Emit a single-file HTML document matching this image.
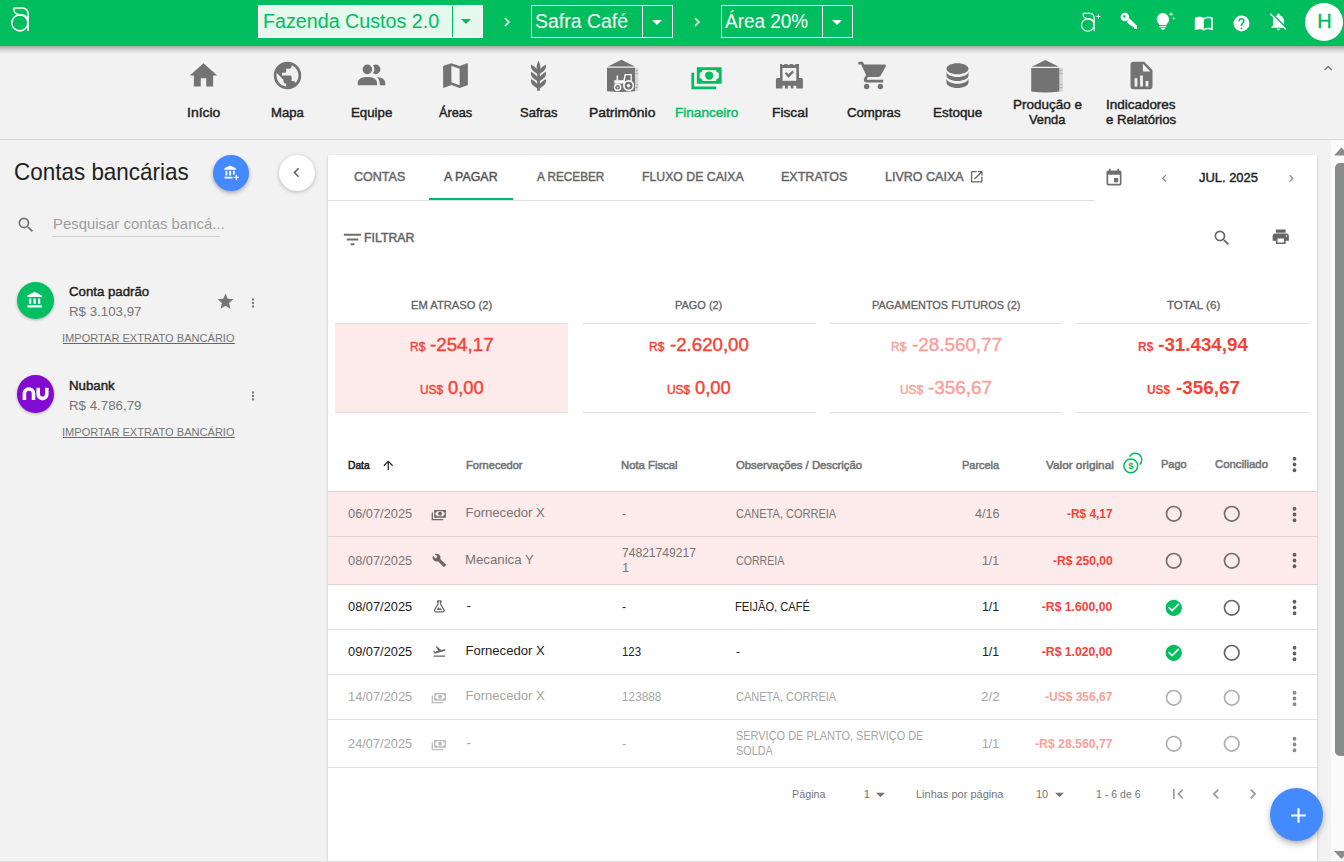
<!DOCTYPE html>
<html lang="pt-BR">
<head>
<meta charset="utf-8">
<title>Aegro - Financeiro - A pagar</title>
<style>
html,body{margin:0;padding:0;background:#f2f2f2}
body{width:1344px;height:862px;overflow:hidden;position:relative;background:#f2f2f2;font-family:"Liberation Sans",sans-serif;}
.a{position:absolute;display:block}
.t{position:absolute;white-space:nowrap;line-height:1;display:block;transform-origin:0 0}
</style>
</head>
<body>
<div class="a" style="left:328px;top:155px;width:989px;height:706px;background:#fff;box-shadow:0 1px 3px rgba(0,0,0,.2),0 1px 1px rgba(0,0,0,.14),0 2px 1px -1px rgba(0,0,0,.12);border-radius:2px 2px 0 0"></div>
<div class="a" style="left:0;top:46px;width:1344px;height:93px;background:#f2f2f2;border-bottom:1px solid #d6d6d6"></div>
<span class="t" style="left:186.93px;top:106.00px;font-size:13.1px;color:#212121;transform:scaleX(1.0662);-webkit-text-stroke:0.42px #212121;">Início</span>
<svg class="a" style="left:187.0px;top:59.0px;" width="33" height="33" viewBox="0 0 24 24"><path fill="#737373" d="M10,20V14H14V20H19V12H22L12,3L2,12H5V20H10Z"/></svg>
<span class="t" style="left:271.10px;top:106.00px;font-size:13.1px;color:#212121;-webkit-text-stroke:0.42px #212121;">Mapa</span>
<svg class="a" style="left:271.3px;top:59.0px;" width="33" height="33" viewBox="0 0 24 24"><path fill="#737373" d="M17.9,17.39C17.64,16.59 16.89,16 16,16H15V13A1,1 0 0,0 14,12H8V10H10A1,1 0 0,0 11,9V7H13A2,2 0 0,0 15,5V4.59C17.93,5.77 20,8.64 20,12C20,14.08 19.2,15.97 17.9,17.39M11,19.93C7.05,19.44 4,16.08 4,12C4,11.38 4.08,10.78 4.21,10.21L9,15V16A2,2 0 0,0 11,18M12,2A10,10 0 0,0 2,12A10,10 0 0,0 12,22A10,10 0 0,0 22,12A10,10 0 0,0 12,2Z"/></svg>
<span class="t" style="left:350.89px;top:106.00px;font-size:13.1px;color:#212121;transform:scaleX(1.0129);-webkit-text-stroke:0.42px #212121;">Equipe</span>
<svg class="a" style="left:354.9px;top:59.0px;" width="33" height="33" viewBox="0 0 24 24"><path fill="#737373" d="M16 17V19H2V17S2 13 9 13 16 17 16 17M12.5 7.5A3.5 3.5 0 1 0 9 11A3.5 3.5 0 0 0 12.5 7.5M15.94 13A5.32 5.32 0 0 1 18 17V19H22V17S22 13.37 15.94 13M15 4A3.39 3.39 0 0 0 13.07 4.59A5 5 0 0 1 13.07 10.410A3.39 3.39 0 0 0 15 11A3.5 3.5 0 0 0 15 4Z"/></svg>
<span class="t" style="left:438.80px;top:106.00px;font-size:13.1px;color:#212121;transform:scaleX(0.9695);-webkit-text-stroke:0.42px #212121;">Áreas</span>
<svg class="a" style="left:438.6px;top:59.0px;" width="33" height="33" viewBox="0 0 24 24"><path fill="#737373" d="M15,19L9,16.89V5L15,7.11M20.5,3C20.44,3 20.39,3 20.34,3L15,5.1L9,3L3.36,4.9C3.15,4.97 3,5.15 3,5.38V20.5A0.5,0.5 0 0,0 3.5,21C3.55,21 3.61,21 3.66,20.97L9,18.9L15,21L20.64,19.1C20.85,19 21,18.85 21,18.62V3.5A0.5,0.5 0 0,0 20.5,3Z"/></svg>
<span class="t" style="left:520.30px;top:106.00px;font-size:13.1px;color:#212121;transform:scaleX(0.9923);-webkit-text-stroke:0.42px #212121;">Safras</span>
<svg class="a" style="left:522.3px;top:59.0px;" width="33" height="33" viewBox="0 0 24 24"><path fill="#737373" d="M7.33,18.33C6.5,17.17 6.5,15.83 6.5,14.5C8.17,15.5 9.83,16.5 10.67,17.67L11,18.23V15.95C9.5,15.05 8.08,14.13 7.33,13.08C6.5,11.92 6.5,10.58 6.5,9.25C8.17,10.25 9.83,11.25 10.67,12.42L11,13V10.7C9.5,9.8 8.08,8.88 7.33,7.83C6.5,6.67 6.5,5.33 6.5,4C8.17,5 9.83,6 10.67,7.17C10.77,7.31 10.86,7.46 10.94,7.62C10.77,7 10.66,6.42 10.65,5.82C10.64,4.31 11.3,2.76 11.96,1.21C12.65,2.69 13.34,4.18 13.35,5.69C13.36,6.32 13.25,6.96 13.07,7.59C13.15,7.45 13.23,7.31 13.33,7.17C14.17,6 15.83,5 17.5,4C17.5,5.33 17.5,6.67 16.67,7.83C15.92,8.88 14.5,9.8 13,10.7V13L13.33,12.42C14.17,11.25 15.83,10.25 17.5,9.25C17.5,10.58 17.5,11.92 16.67,13.08C15.92,14.13 14.5,15.05 13,15.95V18.23L13.33,17.67C14.17,16.5 15.83,15.5 17.5,14.5C17.5,15.83 17.5,17.17 16.67,18.33C15.92,19.38 14.5,20.3 13,21.2V23H11V21.2C9.5,20.3 8.08,19.38 7.33,18.33Z"/></svg>
<span class="t" style="left:589.44px;top:106.00px;font-size:13.1px;color:#212121;transform:scaleX(1.0603);-webkit-text-stroke:0.42px #212121;">Patrimônio</span>
<span class="t" style="left:674.56px;top:106.00px;font-size:13.1px;color:#00bd5e;transform:scaleX(1.0359);-webkit-text-stroke:0.42px #00bd5e;">Financeiro</span>
<svg class="a" style="left:689.6px;top:59.0px;" width="33" height="33" viewBox="0 0 24 24"><path fill="#00bd5e" d="M5,6H23V18H5V6M14,9A3,3 0 0,1 17,12A3,3 0 0,1 14,15A3,3 0 0,1 11,12A3,3 0 0,1 14,9M9,8A2,2 0 0,1 7,10V14A2,2 0 0,1 9,16H19A2,2 0 0,1 21,14V10A2,2 0 0,1 19,8H9M1,10H3V20H19V22H1V10Z"/></svg>
<span class="t" style="left:771.75px;top:106.00px;font-size:13.1px;color:#212121;transform:scaleX(1.0516);-webkit-text-stroke:0.42px #212121;">Fiscal</span>
<span class="t" style="left:847.10px;top:106.00px;font-size:13.1px;color:#212121;transform:scaleX(1.0080);-webkit-text-stroke:0.42px #212121;">Compras</span>
<svg class="a" style="left:857.1px;top:59.0px;" width="33" height="33" viewBox="0 0 24 24"><path fill="#737373" d="M17,18C15.89,18 15,18.89 15,20A2,2 0 0,0 17,22A2,2 0 0,0 19,20C19,18.89 18.1,18 17,18M1,2V4H3L6.6,11.59L5.24,14.04C5.09,14.32 5,14.65 5,15A2,2 0 0,0 7,17H19V15H7.42A0.25,0.25 0 0,1 7.17,14.75C7.17,14.7 7.18,14.66 7.2,14.63L8.1,13H15.55C16.3,13 16.96,12.58 17.3,11.97L20.88,5.5C20.95,5.34 21,5.17 21,5A1,1 0 0,0 20,4H5.21L4.27,2M7,18C5.89,18 5,18.89 5,20A2,2 0 0,0 7,22A2,2 0 0,0 9,20C9,18.89 8.1,18 7,18Z"/></svg>
<span class="t" style="left:932.67px;top:106.00px;font-size:13.1px;color:#212121;transform:scaleX(1.0264);-webkit-text-stroke:0.42px #212121;">Estoque</span>
<svg class="a" style="left:940.7px;top:59.0px;" width="33" height="33" viewBox="0 0 24 24"><path fill="#737373" d="M12,3C7.58,3 4,4.79 4,7C4,9.21 7.58,11 12,11C16.42,11 20,9.21 20,7C20,4.79 16.42,3 12,3M4,9V12C4,14.21 7.58,16 12,16C16.42,16 20,14.21 20,12V9C20,11.21 16.42,13 12,13C7.58,13 4,11.21 4,9M4,14V17C4,19.21 7.58,21 12,21C16.42,21 20,19.21 20,17V14C20,16.21 16.42,18 12,18C7.58,18 4,16.21 4,14Z"/></svg>
<span class="t" style="left:1012.77px;top:98.00px;font-size:13.1px;color:#212121;transform:scaleX(1.0291);-webkit-text-stroke:0.42px #212121;">Produção e</span>
<span class="t" style="left:1028.50px;top:113.00px;font-size:13.1px;color:#212121;transform:scaleX(0.9774);-webkit-text-stroke:0.42px #212121;">Venda</span>
<span class="t" style="left:1106.17px;top:98.00px;font-size:13.1px;color:#212121;transform:scaleX(1.0276);-webkit-text-stroke:0.42px #212121;">Indicadores</span>
<span class="t" style="left:1106.40px;top:113.00px;font-size:13.1px;color:#212121;transform:scaleX(1.0040);-webkit-text-stroke:0.42px #212121;">e Relatórios</span>
<svg class="a" style="left:1125.0px;top:59.0px;" width="33" height="33" viewBox="0 0 24 24"><path fill="#737373" d="M13,9H18.5L13,3.5V9M6,2H14L20,8V20A2,2 0 0,1 18,22H6C4.89,22 4,21.1 4,20V4C4,2.89 4.89,2 6,2M7,20H9V14H7V20M11,20H13V12H11V20M15,20H17V16H15V20Z"/></svg>
<svg class="a" style="left:1320.25px;top:60.25px;" width="16.5" height="16.5" viewBox="0 0 24 24"><path fill="#737373" d="M7.41,15.41L12,10.83L16.59,15.41L18,14L12,8L6,14L7.41,15.41Z"/></svg>
<div class="a" style="left:-30px;top:0;width:1404px;height:46px;background:#00bd5e;box-shadow:0 2px 4px -1px rgba(0,0,0,.2),0 4px 5px 0 rgba(0,0,0,.14),0 1px 10px 0 rgba(0,0,0,.12)"></div>
<div class="a" style="left:258px;top:5px;width:225px;height:33px;background:#e5f8ee;border:1px solid #fff;box-sizing:border-box"></div>
<div class="a" style="left:452px;top:6px;width:1px;height:31px;background:#00bd5e"></div>
<span class="t" style="left:262.52px;top:11.00px;font-size:20px;color:#00bd5e;transform:scaleX(0.9839);">Fazenda Custos 2.0</span>
<svg class="a" style="left:454px;top:9px" width="24" height="24" viewBox="0 0 24 24"><path fill="#00bd5e" d="M7,10L12,15L17,10H7Z"/></svg>
<svg class="a" style="left:498.0px;top:12.5px;" width="18" height="18" viewBox="0 0 24 24"><path fill="#fff" d="M8.59,16.58L13.17,12L8.59,7.41L10,6L16,12L10,18L8.59,16.58Z"/></svg>
<div class="a" style="left:531px;top:5px;width:142px;height:33px;border:1px solid #fff;box-sizing:border-box"></div>
<div class="a" style="left:642px;top:6px;width:1px;height:31px;background:#fff"></div>
<span class="t" style="left:535.00px;top:11.00px;font-size:20px;color:#fff;transform:scaleX(0.9740);">Safra Café</span>
<svg class="a" style="left:644.5px;top:9.5px;" width="24" height="24" viewBox="0 0 24 24"><path fill="#fff" d="M7,10L12,15L17,10H7Z"/></svg>
<svg class="a" style="left:688.0px;top:12.5px;" width="18" height="18" viewBox="0 0 24 24"><path fill="#fff" d="M8.59,16.58L13.17,12L8.59,7.41L10,6L16,12L10,18L8.59,16.58Z"/></svg>
<div class="a" style="left:721px;top:5px;width:132px;height:33px;border:1px solid #fff;box-sizing:border-box"></div>
<div class="a" style="left:822px;top:6px;width:1px;height:31px;background:#fff"></div>
<span class="t" style="left:724.60px;top:11.00px;font-size:20px;color:#fff;transform:scaleX(0.9472);">Área 20%</span>
<svg class="a" style="left:824.5px;top:9.5px;" width="24" height="24" viewBox="0 0 24 24"><path fill="#fff" d="M7,10L12,15L17,10H7Z"/></svg>
<svg class="a" style="left:1194.2px;top:13.4px;" width="19.6" height="19.6" viewBox="0 0 24 24"><path fill="#fff" d="M21,5C19.89,4.65 18.67,4.5 17.5,4.5C15.55,4.5 13.45,4.9 12,6C10.55,4.9 8.45,4.5 6.5,4.5C4.55,4.5 2.45,4.9 1,6V20.65C1,20.9 1.25,21.15 1.5,21.15C1.6,21.15 1.65,21.1 1.75,21.1C3.1,20.45 5.05,20 6.5,20C8.45,20 10.55,20.4 12,21.5C13.35,20.65 15.8,20 17.5,20C19.15,20 20.85,20.3 22.25,21.05C22.35,21.1 22.4,21.1 22.5,21.1C22.75,21.1 23,20.85 23,20.6V6C22.4,5.55 21.75,5.25 21,5M21,18.5C19.9,18.15 18.7,18 17.5,18C15.8,18 13.35,18.65 12,19.5V8C13.35,7.15 15.8,6.5 17.5,6.5C18.7,6.5 19.9,6.65 21,7V18.5Z"/></svg>
<svg class="a" style="left:1231.5px;top:13.5px;" width="19" height="19" viewBox="0 0 24 24"><path fill="#fff" d="M15.07,11.25L14.17,12.17C13.45,12.89 13,13.5 13,15H11V14.5C11,13.39 11.45,12.39 12.17,11.67L13.41,10.41C13.78,10.05 14,9.55 14,9C14,7.89 13.1,7 12,7A2,2 0 0,0 10,9H8A4,4 0 0,1 12,5A4,4 0 0,1 16,9C16,9.88 15.64,10.67 15.07,11.25M13,19H11V17H13M12,2A10,10 0 0,0 2,12A10,10 0 0,0 12,22A10,10 0 0,0 22,12C22,6.47 17.5,2 12,2Z"/></svg>
<svg class="a" style="left:1269.0px;top:12.0px;" width="19" height="19" viewBox="0 0 24 24"><path fill="#fff" d="M20.84,22.73L18.11,20H3V19L5,17V11C5,9.86 5.29,8.73 5.83,7.72L1.11,3L2.39,1.73L22.11,21.46L20.84,22.73M19,15.8V11C19,7.9 16.97,5.17 14,4.29C14,4.19 14,4.1 14,4A2,2 0 0,0 12,2A2,2 0 0,0 10,4C10,4.1 10,4.19 10,4.29C9.39,4.47 8.8,4.74 8.26,5.09L19,15.8M12,23A2,2 0 0,0 14,21H10A2,2 0 0,0 12,23Z"/></svg>
<div class="a" style="left:1305px;top:2.5px;width:38px;height:38px;border-radius:50%;background:#fff"></div>
<span class="t" style="left:1317.20px;top:11.00px;font-size:20px;color:#00bd5e;-webkit-text-stroke:0.4px #00bd5e;">H</span>
<svg class="a" style="left:0;top:0" width="1344" height="140" viewBox="0 0 1344 140"><g fill="none" stroke="#fff" stroke-width="1.6"><path d="M13.7,8H22.5A5.6,5.6 0 0 1 28.1,13.6V30.9M13.7,8C13.7,12 16.3,14.7 19.9,14.7C23.6,14.7 26.6,16.2 28.1,19.6"/><circle cx="19.85" cy="22.9" r="8"/></g><g fill="none" stroke="#fff" stroke-width="1.45" transform="translate(1072.3,7.2) scale(0.78)"><path d="M13.7,8H22.5A5.6,5.6 0 0 1 28.1,13.6V30.9M13.7,8C13.7,12 16.3,14.7 19.9,14.7C23.6,14.7 26.6,16.2 28.1,19.6"/><circle cx="19.85" cy="22.9" r="8"/></g><path fill="#fff" d="M1098.4,13.4 L1099,15.7 L1101.3,16.3 L1099,16.9 L1098.4,19.2 L1097.8,16.9 L1095.5,16.3 L1097.8,15.7Z"/><path fill="#fff" fill-rule="evenodd" d="M1124.9,12.7A4.3,4.3 0 1 0 1124.9,21.3A4.3,4.3 0 1 0 1124.9,12.7ZM1124.4,15.2A1.25,1.25 0 1 1 1124.4,17.7A1.25,1.25 0 1 1 1124.4,15.2ZM1129.2,18.2L1137,25.7V28.9H1134.1V27.3H1132.6V25.9H1131.1L1126.9,22.3Z"/><g fill="#fff"><circle cx="1162.9" cy="19.2" r="6.1"/><path d="M1159.2,22H1166.6V25H1159.2Z"/><rect x="1159.3" y="25.9" width="7.2" height="1.3" rx=".6"/><path d="M1160.6,28H1165.2L1164,29.7H1161.8Z"/><path d="M1171.1,11.8L1171.7,13.6L1173.5,14.2L1171.7,14.8L1171.1,16.6L1170.5,14.8L1168.7,14.2L1170.5,13.6Z"/><path d="M1173.7,16.6L1174.15,17.95L1175.5,18.4L1174.15,18.85L1173.7,20.2L1173.25,18.85L1171.9,18.4L1173.25,17.95Z"/></g><g><path fill="#737373" d="M621.4,59.8L634.9,66.5H607.9Z"/><path fill="#737373" d="M607,67.8H635V91.2Q621,92.8 607,91.2Z"/><rect x="635" y="67.8" width="3.3" height="23.2" fill="#d6d6d6"/><path stroke="#a9a9a9" stroke-width="0.7" d="M635,70.5h3.3M635,73.5h3.3M635,84.5h3.3M635,87.5h3.3"/><g fill="#fff"><path d="M614.3,80.2H623.4L624.6,74H631.8V81H630.6V75.3H625.7L624.6,83.5H614.3Z"/><rect x="616.6" y="75.5" width="1.5" height="5"/><circle cx="628.6" cy="85.6" r="5.6"/><circle cx="617.6" cy="87.3" r="3.8"/></g><circle cx="628.6" cy="85.6" r="3.9" fill="#737373"/><circle cx="628.6" cy="85.6" r="1.7" fill="#fff"/><circle cx="617.6" cy="87.3" r="2.3" fill="#737373"/><circle cx="617.6" cy="87.3" r="0.9" fill="#ddd"/></g><g fill="#737373"><path d="M780,64.1H781.8L782.9,65.3L785.2,64.1H787.2L788.4,65.3L790.7,64.1H792.7L793.9,65.3L796.2,64.1H799V82H780Z"/><path d="M777.4,78H801.4A1.5,1.5 0 0 1 802.9,79.5V88.4H796.3V85.8H793.4V88.4H790.8V85.8H788V88.4H785V85.8H782.5V88.4H775.9V79.5A1.5,1.5 0 0 1 777.4,78Z"/><rect x="782.5" y="68" width="13.8" height="12.8" fill="#f2f2f2"/><path d="M786.2,71.9L788.4,74.1L792.6,70.6L793.9,72.2L788.4,77.9L784.9,73.6Z"/></g><g><path fill="#737373" d="M1045.3,60L1058.8,66.7H1031.8Z"/><path fill="#737373" d="M1031.2,68H1059.6V91.4Q1045.4,93.4 1031.2,91.4Z"/><rect x="1059.6" y="68" width="3.2" height="23.6" fill="#d6d6d6"/><path stroke="#a9a9a9" stroke-width="0.7" d="M1059.6,70.5h3.2M1059.6,73.5h3.2M1059.6,84.5h3.2M1059.6,87.5h3.2"/></g></svg>
<span class="t" style="left:14.26px;top:160.00px;font-size:24px;color:#212121;transform:scaleX(0.9355);">Contas bancárias</span>
<div class="a" style="left:213px;top:155px;width:36px;height:36px;border-radius:50%;background:#448aff;box-shadow:0 2px 4px rgba(0,0,0,.3)"></div>
<svg class="a" style="left:222.6px;top:164.1px" width="17.4" height="17.4" viewBox="0 0 20 20"><path fill="#fff" d="M8.2,1.6L1.6,5V6.5H14.8V5ZM2.9,7.9V13.2H5V7.9ZM7.1,7.9V13.2H9.3V7.9ZM11.4,7.9V12H13.5V7.9ZM1.6,14.6V16.8H11V14.6ZM14.6,12.4V14.6H12.4V16.1H14.6V18.3H16.1V16.1H18.3V14.6H16.1V12.4Z"/></svg>
<div class="a" style="left:279px;top:155px;width:36px;height:36px;border-radius:50%;background:#fff;box-shadow:0 1px 4px rgba(0,0,0,.25)"></div>
<svg class="a" style="left:287.4px;top:162.8px;" width="19" height="19" viewBox="0 0 24 24"><path fill="#616161" d="M15.41,16.58L10.83,12L15.41,7.41L14,6L8,12L14,18L15.41,16.58Z"/></svg>
<svg class="a" style="left:16.0px;top:215.0px;" width="20" height="20" viewBox="0 0 24 24"><path fill="#737373" d="M9.5,3A6.5,6.5 0 0,1 16,9.5C16,11.11 15.41,12.59 14.44,13.73L14.71,14H15.5L20.5,19L19,20.5L14,15.5V14.71L13.73,14.44C12.59,15.41 11.11,16 9.5,16A6.5,6.5 0 0,1 3,9.5A6.5,6.5 0 0,1 9.5,3M9.5,5C7,5 5,7 5,9.5C5,12 7,14 9.5,14C12,14 14,12 14,9.5C14,7 12,5 9.5,5Z"/></svg>
<span class="t" style="left:52.51px;top:216.00px;font-size:15px;color:#9e9e9e;transform:scaleX(0.9945);">Pesquisar contas bancá...</span>
<div class="a" style="left:52px;top:236px;width:168px;height:1px;background:#cecece"></div>
<div class="a" style="left:17px;top:282px;width:37px;height:37px;border-radius:50%;background:#00bf62;box-shadow:0 1px 3px rgba(0,0,0,.3)"></div>
<span class="t" style="left:69.20px;top:285.00px;font-size:13.1px;color:#212121;transform:scaleX(1.0093);-webkit-text-stroke:0.42px #212121;">Conta padrão</span>
<span class="t" style="left:68.98px;top:305.00px;font-size:13.1px;color:#757575;transform:scaleX(1.0162);">R$ 3.103,97</span>
<span class="t" style="left:61.92px;top:333.00px;font-size:11.25px;color:#757575;transform:scaleX(0.9835);">IMPORTAR EXTRATO BANCÁRIO</span>
<div class="a" style="left:62.5px;top:343px;width:172.5px;height:1px;background:#666"></div>
<svg class="a" style="left:246.4px;top:295.5px;" width="14" height="14" viewBox="0 0 24 24"><path fill="#757575" d="M12,16A2,2 0 0,1 14,18A2,2 0 0,1 12,20A2,2 0 0,1 10,18A2,2 0 0,1 12,16M12,10A2,2 0 0,1 14,12A2,2 0 0,1 12,14A2,2 0 0,1 10,12A2,2 0 0,1 12,10M12,4A2,2 0 0,1 14,6A2,2 0 0,1 12,8A2,2 0 0,1 10,6A2,2 0 0,1 12,4Z"/></svg>
<div class="a" style="left:17px;top:375px;width:37px;height:38px;border-radius:50%;background:#820ad1;box-shadow:0 1px 3px rgba(0,0,0,.3)"></div>
<span class="t" style="left:68.99px;top:379.00px;font-size:13.1px;color:#212121;transform:scaleX(1.0138);-webkit-text-stroke:0.42px #212121;">Nubank</span>
<span class="t" style="left:68.98px;top:399.00px;font-size:13.1px;color:#757575;transform:scaleX(1.0162);">R$ 4.786,79</span>
<span class="t" style="left:61.92px;top:427.00px;font-size:11.25px;color:#757575;transform:scaleX(0.9835);">IMPORTAR EXTRATO BANCÁRIO</span>
<div class="a" style="left:62.5px;top:437px;width:172.5px;height:1px;background:#666"></div>
<svg class="a" style="left:246.4px;top:389.0px;" width="14" height="14" viewBox="0 0 24 24"><path fill="#757575" d="M12,16A2,2 0 0,1 14,18A2,2 0 0,1 12,20A2,2 0 0,1 10,18A2,2 0 0,1 12,16M12,10A2,2 0 0,1 14,12A2,2 0 0,1 12,14A2,2 0 0,1 10,12A2,2 0 0,1 12,10M12,4A2,2 0 0,1 14,6A2,2 0 0,1 12,8A2,2 0 0,1 10,6A2,2 0 0,1 12,4Z"/></svg>
<svg class="a" style="left:26.3px;top:291.4px;" width="18" height="18" viewBox="0 0 24 24"><path fill="#fff" d="M11.5,1L2,6V8H21V6M16,10V17H19V10M2,22H21V19H2M10,10V17H13V10M4,10V17H7V10H4Z"/></svg>
<svg class="a" style="left:215.5px;top:292.1px;" width="19" height="19" viewBox="0 0 24 24"><path fill="#757575" d="M12,17.27L18.18,21L16.54,13.97L22,9.24L14.81,8.62L12,2L9.19,8.62L2,9.24L7.45,13.97L5.82,21L12,17.27Z"/></svg>
<svg class="a" style="left:22px;top:384px" width="28" height="20" viewBox="0 0 28 20"><path fill="none" stroke="#fff" stroke-width="3.6" d="M2.4,16V9.6A4.55,4.55 0 0 1 11.5,9.6V16M16.2,3.7V10.3A4.3,4.3 0 0 0 24.8,10.3V3.7"/></svg>
<div class="a" style="left:328px;top:200px;width:767px;height:1px;background:#e0e0e0"></div>
<div class="a" style="left:429px;top:198px;width:84px;height:2px;background:#00bd5e"></div>
<span class="t" style="left:354.20px;top:171.00px;font-size:12.2px;color:#666;transform:scaleX(1.0291);-webkit-text-stroke:0.42px #666;">CONTAS</span>
<span class="t" style="left:444.00px;top:171.00px;font-size:12.2px;color:#555;transform:scaleX(1.0191);-webkit-text-stroke:0.42px #555;">A PAGAR</span>
<span class="t" style="left:536.60px;top:171.00px;font-size:12.2px;color:#666;transform:scaleX(0.9655);-webkit-text-stroke:0.42px #666;">A RECEBER</span>
<span class="t" style="left:641.89px;top:171.00px;font-size:12.2px;color:#666;transform:scaleX(1.0071);-webkit-text-stroke:0.42px #666;">FLUXO DE CAIXA</span>
<span class="t" style="left:781.47px;top:171.00px;font-size:12.2px;color:#666;transform:scaleX(1.0279);-webkit-text-stroke:0.42px #666;">EXTRATOS</span>
<span class="t" style="left:884.77px;top:171.00px;font-size:12.2px;color:#666;transform:scaleX(1.0274);-webkit-text-stroke:0.42px #666;">LIVRO CAIXA</span>
<svg class="a" style="left:968.75px;top:169.25px;" width="15.5" height="15.5" viewBox="0 0 24 24"><path fill="#666" d="M14,3V5H17.59L7.76,14.83L9.17,16.24L19,6.41V10H21V3M19,19H5V5H12V3H5C3.89,3 3,3.9 3,5V19A2,2 0 0,0 5,21H19A2,2 0 0,0 21,19V12H19V19Z"/></svg>
<svg class="a" style="left:1103.8px;top:167.5px;" width="20" height="20" viewBox="0 0 24 24"><path fill="#6e6e6e" d="M17,12H12V17H17V12M16,1V3H8V1H6V3H5C3.89,3 3.01,3.9 3.01,5L3,19A2,2 0 0,0 5,21H19A2,2 0 0,0 21,19V5C21,3.9 20.1,3 19,3H18V1H16M19,19H5V8H19V19Z"/></svg>
<svg class="a" style="left:1156.85px;top:171.15px;" width="14.5" height="14.5" viewBox="0 0 24 24"><path fill="#858585" d="M15.41,16.58L10.83,12L15.41,7.41L14,6L8,12L14,18L15.41,16.58Z"/></svg>
<span class="t" style="left:1198.90px;top:171.00px;font-size:13.1px;color:#212121;transform:scaleX(0.9864);-webkit-text-stroke:0.42px #212121;">JUL. 2025</span>
<svg class="a" style="left:1284.35px;top:171.15px;" width="14.5" height="14.5" viewBox="0 0 24 24"><path fill="#858585" d="M8.59,16.58L13.17,12L8.59,7.41L10,6L16,12L10,18L8.59,16.58Z"/></svg>
<svg class="a" style="left:340.9px;top:227.7px;" width="23" height="23" viewBox="0 0 24 24"><path fill="#6e6e6e" d="M6,13H18V11H6M3,6V8H21V6M10,18H14V16H10V18Z"/></svg>
<span class="t" style="left:364.29px;top:232.00px;font-size:12.2px;color:#616161;transform:scaleX(1.0106);-webkit-text-stroke:0.42px #616161;">FILTRAR</span>
<svg class="a" style="left:1212.2px;top:227.8px;" width="20" height="20" viewBox="0 0 24 24"><path fill="#666" d="M9.5,3A6.5,6.5 0 0,1 16,9.5C16,11.11 15.41,12.59 14.44,13.73L14.71,14H15.5L20.5,19L19,20.5L14,15.5V14.71L13.73,14.44C12.59,15.41 11.11,16 9.5,16A6.5,6.5 0 0,1 3,9.5A6.5,6.5 0 0,1 9.5,3M9.5,5C7,5 5,7 5,9.5C5,12 7,14 9.5,14C12,14 14,12 14,9.5C14,7 12,5 9.5,5Z"/></svg>
<svg class="a" style="left:1271.05px;top:227.25px;" width="19.5" height="19.5" viewBox="0 0 24 24"><path fill="#666" d="M18,3H6V7H18M19,12A1,1 0 0,1 18,11A1,1 0 0,1 19,10A1,1 0 0,1 20,11A1,1 0 0,1 19,12M16,19H8V14H16M19,8H5A3,3 0 0,0 2,11V17H6V21H18V17H22V11A3,3 0 0,0 19,8Z"/></svg>
<div class="a" style="left:335px;top:323px;width:233px;height:90px;background:#fdeaea;border-top:1px solid #e0e0e0;border-bottom:1px solid #e0e0e0;box-sizing:border-box"></div>
<span class="t" style="left:410.60px;top:300.00px;font-size:11px;color:#616161;transform:scaleX(1.0162);-webkit-text-stroke:0.3px #616161;">EM ATRASO (2)</span>
<div class="a" style="left:582.5px;top:323px;width:233.0px;height:90px;background:#fff;border-top:1px solid #e0e0e0;border-bottom:1px solid #e0e0e0;box-sizing:border-box"></div>
<span class="t" style="left:675.40px;top:300.00px;font-size:11px;color:#616161;transform:scaleX(0.9956);-webkit-text-stroke:0.3px #616161;">PAGO (2)</span>
<div class="a" style="left:830px;top:323px;width:232px;height:90px;background:#fff;border-top:1px solid #e0e0e0;border-bottom:1px solid #e0e0e0;box-sizing:border-box"></div>
<span class="t" style="left:872.00px;top:300.00px;font-size:11px;color:#616161;transform:scaleX(0.9942);-webkit-text-stroke:0.3px #616161;">PAGAMENTOS FUTUROS (2)</span>
<div class="a" style="left:1076.7px;top:323px;width:232.0px;height:90px;background:#fff;border-top:1px solid #e0e0e0;border-bottom:1px solid #e0e0e0;box-sizing:border-box"></div>
<span class="t" style="left:1167.00px;top:300.00px;font-size:11px;color:#616161;transform:scaleX(1.0543);-webkit-text-stroke:0.3px #616161;">TOTAL (6)</span>
<span class="t" style="left:409.80px;top:341.00px;font-size:12px;color:#f44336;transform:scaleX(0.9958);-webkit-text-stroke:0.42px #f44336;">R$</span>
<span class="t" style="left:430.00px;top:336.00px;font-size:18.75px;color:#f44336;-webkit-text-stroke:0.42px #f44336;">-254,17</span>
<span class="t" style="left:419.50px;top:384.00px;font-size:12px;color:#f44336;transform:scaleX(0.9928);-webkit-text-stroke:0.42px #f44336;">US$</span>
<span class="t" style="left:447.80px;top:379.00px;font-size:18.75px;color:#f44336;transform:scaleX(0.9760);-webkit-text-stroke:0.42px #f44336;">0,00</span>
<span class="t" style="left:649.40px;top:341.00px;font-size:12px;color:#f44336;transform:scaleX(0.9958);-webkit-text-stroke:0.42px #f44336;">R$</span>
<span class="t" style="left:669.60px;top:336.00px;font-size:18.75px;color:#f44336;transform:scaleX(0.9949);-webkit-text-stroke:0.42px #f44336;">-2.620,00</span>
<span class="t" style="left:666.90px;top:384.00px;font-size:12px;color:#f44336;transform:scaleX(0.9928);-webkit-text-stroke:0.42px #f44336;">US$</span>
<span class="t" style="left:695.20px;top:379.00px;font-size:18.75px;color:#f44336;transform:scaleX(0.9788);-webkit-text-stroke:0.42px #f44336;">0,00</span>
<span class="t" style="left:891.40px;top:341.00px;font-size:12px;color:#f9a19a;transform:scaleX(0.9958);-webkit-text-stroke:0.42px #f9a19a;">R$</span>
<span class="t" style="left:911.60px;top:336.00px;font-size:18.75px;color:#f9a19a;transform:scaleX(1.0041);-webkit-text-stroke:0.42px #f9a19a;">-28.560,77</span>
<span class="t" style="left:900.00px;top:384.00px;font-size:12px;color:#f9a19a;transform:scaleX(0.9928);-webkit-text-stroke:0.42px #f9a19a;">US$</span>
<span class="t" style="left:928.30px;top:379.00px;font-size:18.75px;color:#f9a19a;transform:scaleX(1.0085);-webkit-text-stroke:0.42px #f9a19a;">-356,67</span>
<span class="t" style="left:1138.00px;top:341.00px;font-size:12px;color:#f44336;font-weight:bold;transform:scaleX(0.9958);">R$</span>
<span class="t" style="left:1158.20px;top:336.00px;font-size:18.75px;color:#f44336;font-weight:bold;">-31.434,94</span>
<span class="t" style="left:1147.40px;top:384.00px;font-size:12px;color:#f44336;font-weight:bold;transform:scaleX(0.9928);">US$</span>
<span class="t" style="left:1175.70px;top:379.00px;font-size:18.75px;color:#f44336;font-weight:bold;transform:scaleX(1.0069);">-356,67</span>
<span class="t" style="left:347.90px;top:460.00px;font-size:11.25px;color:#212121;transform:scaleX(0.9100);-webkit-text-stroke:0.55px #212121;">Data</span>
<svg class="a" style="left:381.25px;top:457.65px;" width="14.5" height="14.5" viewBox="0 0 24 24"><path fill="#212121" d="M13,20H11V8L5.5,13.5L4.08,12.08L12,4.16L19.92,12.08L18.5,13.5L13,8V20Z"/></svg>
<span class="t" style="left:466.40px;top:460.00px;font-size:11.25px;color:#757575;transform:scaleX(0.9830);-webkit-text-stroke:0.55px #757575;">Fornecedor</span>
<span class="t" style="left:621.00px;top:460.00px;font-size:11.25px;color:#757575;transform:scaleX(1.0042);-webkit-text-stroke:0.55px #757575;">Nota Fiscal</span>
<span class="t" style="left:735.70px;top:460.00px;font-size:11.25px;color:#757575;transform:scaleX(1.0031);-webkit-text-stroke:0.55px #757575;">Observações / Descrição</span>
<span class="t" style="left:961.60px;top:460.00px;font-size:11.25px;color:#757575;transform:scaleX(0.9720);-webkit-text-stroke:0.55px #757575;">Parcela</span>
<span class="t" style="left:1045.50px;top:460.00px;font-size:11.25px;color:#757575;transform:scaleX(1.0462);-webkit-text-stroke:0.55px #757575;">Valor original</span>
<span class="t" style="left:1161.00px;top:459.00px;font-size:11.25px;color:#757575;transform:scaleX(0.9724);-webkit-text-stroke:0.55px #757575;">Pago</span>
<span class="t" style="left:1215.20px;top:459.00px;font-size:11.25px;color:#757575;transform:scaleX(1.0081);-webkit-text-stroke:0.55px #757575;">Conciliado</span>
<svg class="a" style="left:1282.8px;top:453.0px;" width="23" height="23" viewBox="0 0 24 24"><path fill="#616161" d="M12,16A2,2 0 0,1 14,18A2,2 0 0,1 12,20A2,2 0 0,1 10,18A2,2 0 0,1 12,16M12,10A2,2 0 0,1 14,12A2,2 0 0,1 12,14A2,2 0 0,1 10,12A2,2 0 0,1 12,10M12,4A2,2 0 0,1 14,6A2,2 0 0,1 12,8A2,2 0 0,1 10,6A2,2 0 0,1 12,4Z"/></svg>
<svg class="a" style="left:1116px;top:448px" width="32" height="30" viewBox="0 0 32 30"><g fill="none" stroke="#00bd5e" stroke-width="1.5"><circle cx="14.8" cy="17.8" r="6.9"/><path d="M13.6,8.6A6.5,6.5 0 1 1 23.6,16.6"/></g><text x="14.8" y="21.1" text-anchor="middle" font-family="Liberation Sans, sans-serif" font-weight="bold" font-size="9.5" fill="#00bd5e">$</text></svg>
<div class="a" style="left:328px;top:491px;width:989px;height:45px;background:#fdeaea;border-top:1px solid #e0cfcf;box-sizing:border-box"></div>
<div class="a" style="left:328px;top:536px;width:989px;height:48px;background:#fdeaea;border-top:1px solid #e0cfcf;box-sizing:border-box"></div>
<div class="a" style="left:328px;top:584px;width:989px;height:45px;background:#fff;border-top:1px solid #e0cfcf;box-sizing:border-box"></div>
<div class="a" style="left:328px;top:629px;width:989px;height:45px;background:#fff;border-top:1px solid #e0e0e0;box-sizing:border-box"></div>
<div class="a" style="left:328px;top:674px;width:989px;height:45px;background:#fff;border-top:1px solid #e0e0e0;box-sizing:border-box"></div>
<div class="a" style="left:328px;top:719px;width:989px;height:48px;background:#fff;border-top:1px solid #e0e0e0;box-sizing:border-box"></div>
<div class="a" style="left:328px;top:767px;width:989px;height:1px;background:#e0e0e0"></div>
<span class="t" style="left:347.90px;top:508.00px;font-size:12.4px;color:#757575;transform:scaleX(1.0350);">06/07/2025</span>
<svg class="a" style="left:431.45px;top:505.85px;" width="15.5" height="15.5" viewBox="0 0 24 24"><path fill="#686868" d="M5,6H23V18H5V6M14,9A3,3 0 0,1 17,12A3,3 0 0,1 14,15A3,3 0 0,1 11,12A3,3 0 0,1 14,9M9,8A2,2 0 0,1 7,10V14A2,2 0 0,1 9,16H19A2,2 0 0,1 21,14V10A2,2 0 0,1 19,8H9M1,10H3V20H19V22H1V10Z"/></svg>
<span class="t" style="left:465.40px;top:506.00px;font-size:13.1px;color:#757575;">Fornecedor X</span>
<span class="t" style="left:621.90px;top:508.00px;font-size:12.2px;color:#757575;">-</span>
<span class="t" style="left:735.70px;top:508.00px;font-size:12.2px;color:#757575;transform:scaleX(0.9042);">CANETA, CORREIA</span>
<span class="t" style="left:974.70px;top:508.00px;font-size:12.2px;color:#757575;transform:scaleX(1.0316);">4/16</span>
<span class="t" style="left:1066.70px;top:508.00px;font-size:12.2px;color:#f44336;font-weight:bold;transform:scaleX(0.9752);">-R$ 4,17</span>
<svg class="a" style="left:1163.95px;top:504.25px;" width="19.5" height="19.5" viewBox="0 0 24 24"><path fill="#6e6e6e" d="M12,20A8,8 0 0,1 4,12A8,8 0 0,1 12,4A8,8 0 0,1 20,12A8,8 0 0,1 12,20M12,2A10,10 0 0,0 2,12A10,10 0 0,0 12,22A10,10 0 0,0 22,12A10,10 0 0,0 12,2Z"/></svg>
<svg class="a" style="left:1221.85px;top:504.25px;" width="19.5" height="19.5" viewBox="0 0 24 24"><path fill="#6e6e6e" d="M12,20A8,8 0 0,1 4,12A8,8 0 0,1 12,4A8,8 0 0,1 20,12A8,8 0 0,1 12,20M12,2A10,10 0 0,0 2,12A10,10 0 0,0 12,22A10,10 0 0,0 22,12A10,10 0 0,0 12,2Z"/></svg>
<svg class="a" style="left:1282.8px;top:502.5px;" width="23" height="23" viewBox="0 0 24 24"><path fill="#616161" d="M12,16A2,2 0 0,1 14,18A2,2 0 0,1 12,20A2,2 0 0,1 10,18A2,2 0 0,1 12,16M12,10A2,2 0 0,1 14,12A2,2 0 0,1 12,14A2,2 0 0,1 10,12A2,2 0 0,1 12,10M12,4A2,2 0 0,1 14,6A2,2 0 0,1 12,8A2,2 0 0,1 10,6A2,2 0 0,1 12,4Z"/></svg>
<span class="t" style="left:347.90px;top:555.00px;font-size:12.4px;color:#757575;transform:scaleX(1.0350);">08/07/2025</span>
<svg class="a" style="left:431.9px;top:553.3px;" width="14.6" height="14.6" viewBox="0 0 24 24"><path fill="#686868" d="M22.7,19L13.6,9.9C14.5,7.6 14,4.9 12.1,3C10.1,1 7.1,0.6 4.7,1.7L9,6L6,9L1.6,4.7C0.4,7.1 0.9,10.1 2.9,12.1C4.8,14 7.5,14.5 9.8,13.6L18.9,22.7C19.3,23.1 19.9,23.1 20.3,22.7L22.6,20.4C23.1,20 23.1,19.3 22.7,19Z"/></svg>
<span class="t" style="left:465.39px;top:553.00px;font-size:13.1px;color:#757575;transform:scaleX(1.0092);">Mecanica Y</span>
<span class="t" style="left:621.60px;top:547.00px;font-size:12.2px;color:#757575;transform:scaleX(0.9909);">74821749217</span>
<span class="t" style="left:622.30px;top:562.00px;font-size:12.2px;color:#757575;">1</span>
<span class="t" style="left:735.70px;top:555.00px;font-size:12.2px;color:#757575;transform:scaleX(0.8688);">CORREIA</span>
<span class="t" style="left:982.10px;top:555.00px;font-size:12.2px;color:#757575;transform:scaleX(1.0079);">1/1</span>
<span class="t" style="left:1052.50px;top:555.00px;font-size:12.2px;color:#f44336;font-weight:bold;transform:scaleX(0.9914);">-R$ 250,00</span>
<svg class="a" style="left:1163.95px;top:551.05px;" width="19.5" height="19.5" viewBox="0 0 24 24"><path fill="#6e6e6e" d="M12,20A8,8 0 0,1 4,12A8,8 0 0,1 12,4A8,8 0 0,1 20,12A8,8 0 0,1 12,20M12,2A10,10 0 0,0 2,12A10,10 0 0,0 12,22A10,10 0 0,0 22,12A10,10 0 0,0 12,2Z"/></svg>
<svg class="a" style="left:1221.85px;top:551.05px;" width="19.5" height="19.5" viewBox="0 0 24 24"><path fill="#6e6e6e" d="M12,20A8,8 0 0,1 4,12A8,8 0 0,1 12,4A8,8 0 0,1 20,12A8,8 0 0,1 12,20M12,2A10,10 0 0,0 2,12A10,10 0 0,0 12,22A10,10 0 0,0 22,12A10,10 0 0,0 12,2Z"/></svg>
<svg class="a" style="left:1282.8px;top:549.3px;" width="23" height="23" viewBox="0 0 24 24"><path fill="#616161" d="M12,16A2,2 0 0,1 14,18A2,2 0 0,1 12,20A2,2 0 0,1 10,18A2,2 0 0,1 12,16M12,10A2,2 0 0,1 14,12A2,2 0 0,1 12,14A2,2 0 0,1 10,12A2,2 0 0,1 12,10M12,4A2,2 0 0,1 14,6A2,2 0 0,1 12,8A2,2 0 0,1 10,6A2,2 0 0,1 12,4Z"/></svg>
<span class="t" style="left:347.90px;top:601.00px;font-size:12.4px;color:#212121;transform:scaleX(1.0350);">08/07/2025</span>
<svg class="a" style="left:431.9px;top:599.3px;" width="14.6" height="14.6" viewBox="0 0 24 24"><path fill="#686868" d="M5,19A1,1 0 0,0 6,20H18A1,1 0 0,0 19,19C19,18.79 18.93,18.59 18.82,18.43L13,8.35V4H11V8.35L5.18,18.43C5.07,18.59 5,18.79 5,19M6,22A3,3 0 0,1 3,19C3,18.4 3.18,17.84 3.5,17.37L9,7.81V6A1,1 0 0,1 8,5V4A2,2 0 0,1 10,2H14A2,2 0 0,1 16,4V5A1,1 0 0,1 15,6V7.81L20.5,17.37C20.82,17.84 21,18.4 21,19A3,3 0 0,1 18,22H6M13,16L14.34,14.66L16.27,18H7.73L10.39,13.39L13,16Z"/></svg>
<span class="t" style="left:466.60px;top:599.00px;font-size:13.1px;color:#212121;">-</span>
<span class="t" style="left:621.90px;top:601.00px;font-size:12.2px;color:#212121;">-</span>
<span class="t" style="left:734.78px;top:601.00px;font-size:12.2px;color:#212121;transform:scaleX(0.9157);">FEIJÃO, CAFÉ</span>
<span class="t" style="left:982.10px;top:601.00px;font-size:12.2px;color:#212121;transform:scaleX(1.0079);">1/1</span>
<span class="t" style="left:1041.80px;top:601.00px;font-size:12.2px;color:#f44336;font-weight:bold;">-R$ 1.600,00</span>
<svg class="a" style="left:1163.95px;top:598.05px;" width="19.5" height="19.5" viewBox="0 0 24 24"><path fill="#00bd5e" d="M12,2C6.5,2 2,6.5 2,12C2,17.5 6.5,22 12,22C17.5,22 22,17.5 22,12C22,6.5 17.5,2 12,2M10,17L5,12L6.41,10.59L10,14.17L17.59,6.58L19,8L10,17Z"/></svg>
<svg class="a" style="left:1221.85px;top:598.05px;" width="19.5" height="19.5" viewBox="0 0 24 24"><path fill="#666" d="M12,20A8,8 0 0,1 4,12A8,8 0 0,1 12,4A8,8 0 0,1 20,12A8,8 0 0,1 12,20M12,2A10,10 0 0,0 2,12A10,10 0 0,0 12,22A10,10 0 0,0 22,12A10,10 0 0,0 12,2Z"/></svg>
<svg class="a" style="left:1282.8px;top:596.3px;" width="23" height="23" viewBox="0 0 24 24"><path fill="#616161" d="M12,16A2,2 0 0,1 14,18A2,2 0 0,1 12,20A2,2 0 0,1 10,18A2,2 0 0,1 12,16M12,10A2,2 0 0,1 14,12A2,2 0 0,1 12,14A2,2 0 0,1 10,12A2,2 0 0,1 12,10M12,4A2,2 0 0,1 14,6A2,2 0 0,1 12,8A2,2 0 0,1 10,6A2,2 0 0,1 12,4Z"/></svg>
<span class="t" style="left:347.90px;top:646.00px;font-size:12.4px;color:#212121;transform:scaleX(1.0350);">09/07/2025</span>
<svg class="a" style="left:431.9px;top:644.3px;" width="14.6" height="14.6" viewBox="0 0 24 24"><path fill="#686868" d="M2.5,19H21.5V21H2.5ZM22.07,9.64C21.86,8.84 21.03,8.36 20.23,8.58L14.92,10L8.02,3.57L6.09,4.08L10.23,11.25L5.26,12.58L3.29,11.04L1.84,11.43L3.66,14.59L4.43,15.92L6.03,15.49L11.34,14.07L15.69,12.91L21,11.49C21.81,11.26 22.28,10.44 22.07,9.64Z"/></svg>
<span class="t" style="left:465.40px;top:644.00px;font-size:13.1px;color:#212121;">Fornecedor X</span>
<span class="t" style="left:621.60px;top:646.00px;font-size:12.2px;color:#212121;transform:scaleX(0.9389);">123</span>
<span class="t" style="left:736.00px;top:646.00px;font-size:12.2px;color:#212121;">-</span>
<span class="t" style="left:982.10px;top:646.00px;font-size:12.2px;color:#212121;transform:scaleX(1.0079);">1/1</span>
<span class="t" style="left:1041.80px;top:646.00px;font-size:12.2px;color:#f44336;font-weight:bold;">-R$ 1.020,00</span>
<svg class="a" style="left:1163.95px;top:643.25px;" width="19.5" height="19.5" viewBox="0 0 24 24"><path fill="#00bd5e" d="M12,2C6.5,2 2,6.5 2,12C2,17.5 6.5,22 12,22C17.5,22 22,17.5 22,12C22,6.5 17.5,2 12,2M10,17L5,12L6.41,10.59L10,14.17L17.59,6.58L19,8L10,17Z"/></svg>
<svg class="a" style="left:1221.85px;top:643.25px;" width="19.5" height="19.5" viewBox="0 0 24 24"><path fill="#666" d="M12,20A8,8 0 0,1 4,12A8,8 0 0,1 12,4A8,8 0 0,1 20,12A8,8 0 0,1 12,20M12,2A10,10 0 0,0 2,12A10,10 0 0,0 12,22A10,10 0 0,0 22,12A10,10 0 0,0 12,2Z"/></svg>
<svg class="a" style="left:1282.8px;top:641.5px;" width="23" height="23" viewBox="0 0 24 24"><path fill="#616161" d="M12,16A2,2 0 0,1 14,18A2,2 0 0,1 12,20A2,2 0 0,1 10,18A2,2 0 0,1 12,16M12,10A2,2 0 0,1 14,12A2,2 0 0,1 12,14A2,2 0 0,1 10,12A2,2 0 0,1 12,10M12,4A2,2 0 0,1 14,6A2,2 0 0,1 12,8A2,2 0 0,1 10,6A2,2 0 0,1 12,4Z"/></svg>
<span class="t" style="left:347.90px;top:691.00px;font-size:12.4px;color:#a6a6a6;transform:scaleX(1.0350);">14/07/2025</span>
<svg class="a" style="left:431.45px;top:688.85px;" width="15.5" height="15.5" viewBox="0 0 24 24"><path fill="#b9b9b9" d="M5,6H23V18H5V6M14,9A3,3 0 0,1 17,12A3,3 0 0,1 14,15A3,3 0 0,1 11,12A3,3 0 0,1 14,9M9,8A2,2 0 0,1 7,10V14A2,2 0 0,1 9,16H19A2,2 0 0,1 21,14V10A2,2 0 0,1 19,8H9M1,10H3V20H19V22H1V10Z"/></svg>
<span class="t" style="left:465.40px;top:689.00px;font-size:13.1px;color:#a6a6a6;">Fornecedor X</span>
<span class="t" style="left:621.60px;top:691.00px;font-size:12.2px;color:#a6a6a6;transform:scaleX(0.9684);">123888</span>
<span class="t" style="left:735.70px;top:691.00px;font-size:12.2px;color:#a6a6a6;transform:scaleX(0.9042);">CANETA, CORREIA</span>
<span class="t" style="left:980.60px;top:691.00px;font-size:12.2px;color:#a6a6a6;transform:scaleX(1.0953);">2/2</span>
<span class="t" style="left:1044.90px;top:691.00px;font-size:12.2px;color:#f9a19a;font-weight:bold;transform:scaleX(0.9847);">-US$ 356,67</span>
<svg class="a" style="left:1163.95px;top:688.25px;" width="19.5" height="19.5" viewBox="0 0 24 24"><path fill="#b0b0b0" d="M12,20A8,8 0 0,1 4,12A8,8 0 0,1 12,4A8,8 0 0,1 20,12A8,8 0 0,1 12,20M12,2A10,10 0 0,0 2,12A10,10 0 0,0 12,22A10,10 0 0,0 22,12A10,10 0 0,0 12,2Z"/></svg>
<svg class="a" style="left:1221.85px;top:688.25px;" width="19.5" height="19.5" viewBox="0 0 24 24"><path fill="#b0b0b0" d="M12,20A8,8 0 0,1 4,12A8,8 0 0,1 12,4A8,8 0 0,1 20,12A8,8 0 0,1 12,20M12,2A10,10 0 0,0 2,12A10,10 0 0,0 12,22A10,10 0 0,0 22,12A10,10 0 0,0 12,2Z"/></svg>
<svg class="a" style="left:1282.8px;top:686.5px;" width="23" height="23" viewBox="0 0 24 24"><path fill="#8a8a8a" d="M12,16A2,2 0 0,1 14,18A2,2 0 0,1 12,20A2,2 0 0,1 10,18A2,2 0 0,1 12,16M12,10A2,2 0 0,1 14,12A2,2 0 0,1 12,14A2,2 0 0,1 10,12A2,2 0 0,1 12,10M12,4A2,2 0 0,1 14,6A2,2 0 0,1 12,8A2,2 0 0,1 10,6A2,2 0 0,1 12,4Z"/></svg>
<span class="t" style="left:347.90px;top:738.00px;font-size:12.4px;color:#a6a6a6;transform:scaleX(1.0350);">24/07/2025</span>
<svg class="a" style="left:431.45px;top:735.85px;" width="15.5" height="15.5" viewBox="0 0 24 24"><path fill="#b9b9b9" d="M5,6H23V18H5V6M14,9A3,3 0 0,1 17,12A3,3 0 0,1 14,15A3,3 0 0,1 11,12A3,3 0 0,1 14,9M9,8A2,2 0 0,1 7,10V14A2,2 0 0,1 9,16H19A2,2 0 0,1 21,14V10A2,2 0 0,1 19,8H9M1,10H3V20H19V22H1V10Z"/></svg>
<span class="t" style="left:466.60px;top:736.00px;font-size:13.1px;color:#a6a6a6;">-</span>
<span class="t" style="left:621.90px;top:738.00px;font-size:12.2px;color:#a6a6a6;">-</span>
<span class="t" style="left:735.70px;top:730.00px;font-size:12.2px;color:#a6a6a6;transform:scaleX(0.8984);">SERVIÇO DE PLANTO, SERVIÇO DE</span>
<span class="t" style="left:735.70px;top:745.00px;font-size:12.2px;color:#a6a6a6;transform:scaleX(0.8889);">SOLDA</span>
<span class="t" style="left:982.10px;top:738.00px;font-size:12.2px;color:#a6a6a6;transform:scaleX(1.0079);">1/1</span>
<span class="t" style="left:1034.80px;top:738.00px;font-size:12.2px;color:#f9a19a;font-weight:bold;transform:scaleX(1.0030);">-R$ 28.560,77</span>
<svg class="a" style="left:1163.95px;top:734.25px;" width="19.5" height="19.5" viewBox="0 0 24 24"><path fill="#b0b0b0" d="M12,20A8,8 0 0,1 4,12A8,8 0 0,1 12,4A8,8 0 0,1 20,12A8,8 0 0,1 12,20M12,2A10,10 0 0,0 2,12A10,10 0 0,0 12,22A10,10 0 0,0 22,12A10,10 0 0,0 12,2Z"/></svg>
<svg class="a" style="left:1221.85px;top:734.25px;" width="19.5" height="19.5" viewBox="0 0 24 24"><path fill="#b0b0b0" d="M12,20A8,8 0 0,1 4,12A8,8 0 0,1 12,4A8,8 0 0,1 20,12A8,8 0 0,1 12,20M12,2A10,10 0 0,0 2,12A10,10 0 0,0 12,22A10,10 0 0,0 22,12A10,10 0 0,0 12,2Z"/></svg>
<svg class="a" style="left:1282.8px;top:732.5px;" width="23" height="23" viewBox="0 0 24 24"><path fill="#8a8a8a" d="M12,16A2,2 0 0,1 14,18A2,2 0 0,1 12,20A2,2 0 0,1 10,18A2,2 0 0,1 12,16M12,10A2,2 0 0,1 14,12A2,2 0 0,1 12,14A2,2 0 0,1 10,12A2,2 0 0,1 12,10M12,4A2,2 0 0,1 14,6A2,2 0 0,1 12,8A2,2 0 0,1 10,6A2,2 0 0,1 12,4Z"/></svg>
<span class="t" style="left:791.60px;top:789.00px;font-size:11.25px;color:#757575;transform:scaleX(0.9560);">Página</span>
<span class="t" style="left:863.80px;top:789.00px;font-size:11.25px;color:#757575;">1</span>
<svg class="a" style="left:869.8px;top:783.9px;" width="21" height="21" viewBox="0 0 24 24"><path fill="#757575" d="M7,10L12,15L17,10H7Z"/></svg>
<span class="t" style="left:916.20px;top:789.00px;font-size:11.25px;color:#757575;transform:scaleX(0.9780);">Linhas por página</span>
<span class="t" style="left:1036.00px;top:789.00px;font-size:11.25px;color:#757575;transform:scaleX(0.9709);">10</span>
<svg class="a" style="left:1049.1px;top:783.9px;" width="21" height="21" viewBox="0 0 24 24"><path fill="#757575" d="M7,10L12,15L17,10H7Z"/></svg>
<span class="t" style="left:1095.90px;top:789.00px;font-size:11.25px;color:#757575;transform:scaleX(0.9371);">1 - 6 de 6</span>
<svg class="a" style="left:1168.0px;top:783.6px;" width="20" height="20" viewBox="0 0 24 24"><path fill="#999" d="M18.41,16.59L13.82,12L18.41,7.41L17,6L11,12L17,18L18.41,16.59M6,6H8V18H6V6Z"/></svg>
<svg class="a" style="left:1205.7px;top:783.6px;" width="20" height="20" viewBox="0 0 24 24"><path fill="#999" d="M15.41,16.58L10.83,12L15.41,7.41L14,6L8,12L14,18L15.41,16.58Z"/></svg>
<svg class="a" style="left:1242.9px;top:783.6px;" width="20" height="20" viewBox="0 0 24 24"><path fill="#999" d="M8.59,16.58L13.17,12L8.59,7.41L10,6L16,12L10,18L8.59,16.58Z"/></svg>
<div class="a" style="left:1331px;top:140px;width:13px;height:722px;background:#fafafa"></div>
<div class="a" style="left:1335px;top:163px;width:20px;height:593px;background:#8a8c8b;border-radius:5px"></div>
<svg class="a" style="left:1331px;top:140px" width="13" height="722" viewBox="0 0 13 722"><path fill="#8a8c8b" d="M3,15.5L10.5,7.5L18,15.5ZM3,711L10.5,719L18,711Z"/></svg>
<div class="a" style="left:1270px;top:788px;width:53px;height:53px;border-radius:50%;background:#448aff;box-shadow:0 3px 5px -1px rgba(0,0,0,.2),0 4px 8px 0 rgba(0,0,0,.1),0 1px 10px 0 rgba(0,0,0,.08)"></div>
<svg class="a" style="left:1285.5px;top:802.5px;" width="25" height="25" viewBox="0 0 24 24"><path fill="#fff" d="M19,13H13V19H11V13H5V11H11V5H13V11H19V13Z"/></svg>
<div class="a" style="left:0;top:861px;width:1344px;height:1px;background:#dde0e0"></div>
</body>
</html>
